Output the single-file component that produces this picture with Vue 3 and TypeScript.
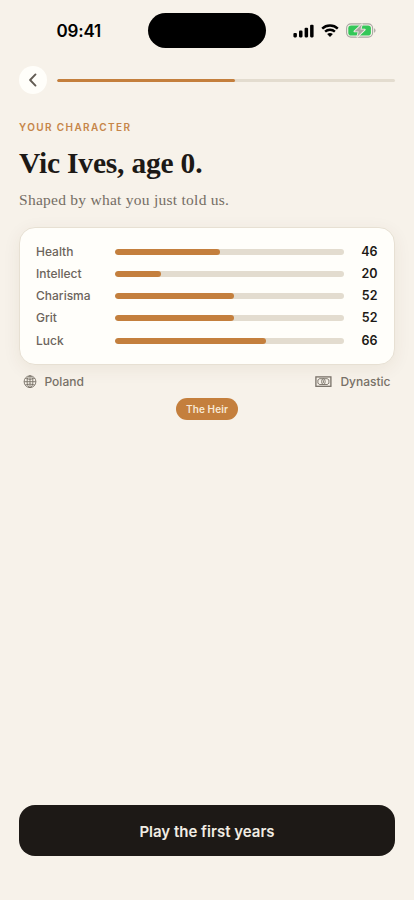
<script setup lang="ts">
interface Stat {
  label: string
  value: number
}

const stats: Stat[] = [
  { label: 'Health', value: 46 },
  { label: 'Intellect', value: 20 },
  { label: 'Charisma', value: 52 },
  { label: 'Grit', value: 52 },
  { label: 'Luck', value: 66 },
]

const progress = 52.6
</script>

<template>
  <main class="screen">
    <header class="status">
      <time class="clock">09:41</time>
      <div class="island"></div>
      <div class="indicators">
        <svg class="signal" viewBox="0 0 22 14" width="22" height="14">
          <rect x="0.4" y="9" width="3.5" height="4.4" rx="1.1" />
          <rect x="6" y="6.6" width="3.5" height="6.8" rx="1.1" />
          <rect x="11.6" y="3.7" width="3.5" height="9.7" rx="1.1" />
          <rect x="17.1" y="0.7" width="3.5" height="12.7" rx="1.1" />
        </svg>
        <svg class="wifi" viewBox="0 0 18 13" width="18" height="13">
          <path d="M1.2 4.7C5.5 0.5 12.5 0.5 16.8 4.7" />
          <path d="M4.1 7.7C6.8 5.1 11.2 5.1 13.9 7.7" />
          <path class="dot" d="M6.1 10.1Q9 7.7 11.9 10.1L9 13Z" />
        </svg>
        <svg class="battery" viewBox="0 0 30 15" width="30" height="15">
          <rect class="shell" x="0.6" y="0.9" width="26" height="13.2" rx="4.3" />
          <rect class="charge" x="2.3" y="2.5" width="22.6" height="10" rx="2.8" />
          <path class="cap" d="M28.1 5.3Q29.5 5.8 29.5 7.5T28.1 9.7Z" />
          <path class="bolt" d="M15.9 1.3L8.4 8.4H12.7L11.3 13.8L18.8 6.6H14.5Z" />
        </svg>
      </div>
    </header>

    <nav class="topbar">
      <button class="back" aria-label="Back">
        <svg viewBox="0 0 10 14" width="10" height="14">
          <path d="M7.5 1.4L2.1 7L7.5 12.6" />
        </svg>
      </button>
      <div class="track steps"><div class="fill" :style="{ width: progress + '%' }"></div></div>
    </nav>

    <p class="eyebrow">YOUR CHARACTER</p>
    <h1 class="title">Vic Ives, age 0.</h1>
    <p class="lede">Shaped by what you just told us.</p>

    <section class="card">
      <div v-for="stat in stats" :key="stat.label" class="stat">
        <span class="label">{{ stat.label }}</span>
        <div class="track"><div class="fill" :style="{ width: stat.value + '%' }"></div></div>
        <span class="value">{{ stat.value }}</span>
      </div>
    </section>

    <div class="origin">
      <span class="fact">
        <svg class="globe" viewBox="0 0 14 14" width="14" height="14">
          <circle cx="7" cy="6.7" r="5.9" />
          <ellipse cx="7" cy="6.7" rx="2.9" ry="5.9" />
          <path d="M7 0.8V12.6M1.1 6.7H12.9M2.3 3.5Q7 5.1 11.7 3.5M2.3 9.9Q7 8.3 11.7 9.9" />
        </svg>
        Poland
      </span>
      <span class="fact wealth">
        <svg class="note" viewBox="0 0 17 12" width="17" height="12">
          <rect class="edge" x="0.9" y="0.9" width="15" height="9.4" />
          <path d="M4.3 2.7H12.5Q12.7 3.7 13.9 3.9V7.3Q12.7 7.5 12.5 8.5H4.3Q4.1 7.5 2.9 7.3V3.9Q4.1 3.7 4.3 2.7Z" />
          <ellipse cx="8.4" cy="5.6" rx="1.8" ry="2.8" />
          <path d="M8.4 4.3V6.9" />
        </svg>
        Dynastic
      </span>
    </div>

    <span class="badge">The Heir</span>

    <button class="cta">Play the first years</button>
  </main>
</template>

<style>
body {
  margin: 0;
  background: #f7f2ea;
}
</style>

<style scoped>
.screen {
  box-sizing: border-box;
  width: 414px;
  height: 900px;
  padding: 0 19px 44px;
  display: flex;
  flex-direction: column;
  overflow: hidden;
  background: #f7f2ea;
  color: #1d1916;
  font-family: Inter, "Liberation Sans", sans-serif;
}

.screen p,
.screen h1 {
  margin: 0;
  white-space: nowrap;
}

button {
  border: 0;
  padding: 0;
  font-family: inherit;
}

.status {
  display: grid;
  grid-template-columns: 129px 118px 129px;
  align-items: center;
  height: 35px;
  padding-top: 13px;
}

.clock {
  padding-left: 37.5px;
  font-size: 17px;
  line-height: 20px;
  font-weight: 600;
  letter-spacing: -0.2px;
  color: #000;
}

.island {
  height: 35px;
  border-radius: 18px;
  background: #000;
}

.indicators {
  display: flex;
  align-items: center;
  padding-left: 27px;
}

.wifi {
  margin-left: 6px;
}

.battery {
  margin-left: 7px;
}

.wifi path {
  fill: none;
  stroke: #000;
  stroke-width: 2.4;
}

.wifi .dot {
  fill: #000;
  stroke: none;
}

.shell {
  fill: none;
  stroke: #aaa7a2;
  stroke-width: 1.1;
}

.charge {
  fill: #34c759;
}

.cap {
  fill: #aaa7a2;
}

.bolt {
  fill: #aaa7a2;
  stroke: #f6f2ea;
  stroke-width: 1.7;
  stroke-linejoin: round;
  paint-order: stroke;
}

.topbar {
  display: flex;
  align-items: center;
  gap: 10px;
  margin-top: 18px;
}

.back {
  display: flex;
  align-items: center;
  justify-content: center;
  width: 28px;
  height: 28px;
  border-radius: 50%;
  background: #fffefa;
}

.back path {
  fill: none;
  stroke: #625b53;
  stroke-width: 1.9;
  stroke-linecap: round;
  stroke-linejoin: round;
}

.track {
  flex: 1;
  height: 6px;
  border-radius: 3px;
  background: #e3dccf;
  overflow: hidden;
}

.fill {
  height: 100%;
  border-radius: 3px;
  background: #c47f3d;
}

.steps {
  height: 3px;
}

.eyebrow {
  padding-top: 26px;
  font-size: 10px;
  line-height: 14px;
  font-weight: 600;
  letter-spacing: 1.4px;
  color: #c68548;
}

.title {
  padding-top: 11px;
  font-family: "Liberation Serif", serif;
  font-size: 29.5px;
  line-height: 36px;
  font-weight: 700;
  letter-spacing: -0.2px;
}

.lede {
  padding-top: 9px;
  font-family: "Liberation Serif", serif;
  font-size: 15.5px;
  line-height: 20px;
  letter-spacing: 0.26px;
  color: #746d64;
}

.card {
  box-sizing: border-box;
  height: 138px;
  margin-top: 17px;
  padding: 12.4px 16px;
  border: 1px solid #e7e0d3;
  border-radius: 16px;
  background: #fffefa;
  box-shadow: 0 4px 18px rgba(80, 60, 20, 0.07);
}

.stat {
  display: flex;
  align-items: center;
  height: 22.25px;
  font-size: 12px;
  line-height: 16px;
}

.label {
  width: 79px;
  font-weight: 500;
  color: #6c645c;
}

.value {
  width: 34px;
  padding-right: 0.5px;
  box-sizing: border-box;
  text-align: right;
  font-size: 12.5px;
  font-weight: 600;
}

.origin {
  display: flex;
  justify-content: space-between;
  padding: 8px 4.5px 0 4px;
  font-size: 12px;
  line-height: 18px;
  font-weight: 500;
  color: #777067;
}

.fact {
  display: flex;
  align-items: center;
  gap: 7.5px;
}

.globe,
.note {
  fill: none;
  stroke: #777067;
  stroke-width: 0.9;
}

.wealth {
  gap: 8.5px;
}

.note .edge {
  stroke-width: 1.3;
}

.badge {
  align-self: center;
  margin-top: 7px;
  padding: 0 9.5px;
  border-radius: 11px;
  background: #c47f3d;
  color: #f8e9d5;
  font-size: 10px;
  line-height: 22px;
  font-weight: 600;
  letter-spacing: 0.12px;
}

.cta {
  flex: none;
  height: 51px;
  margin-top: auto;
  padding-top: 1px;
  border-radius: 16px;
  background: #1d1916;
  color: #f1ece3;
  font-size: 15px;
  font-weight: 600;
}
</style>
